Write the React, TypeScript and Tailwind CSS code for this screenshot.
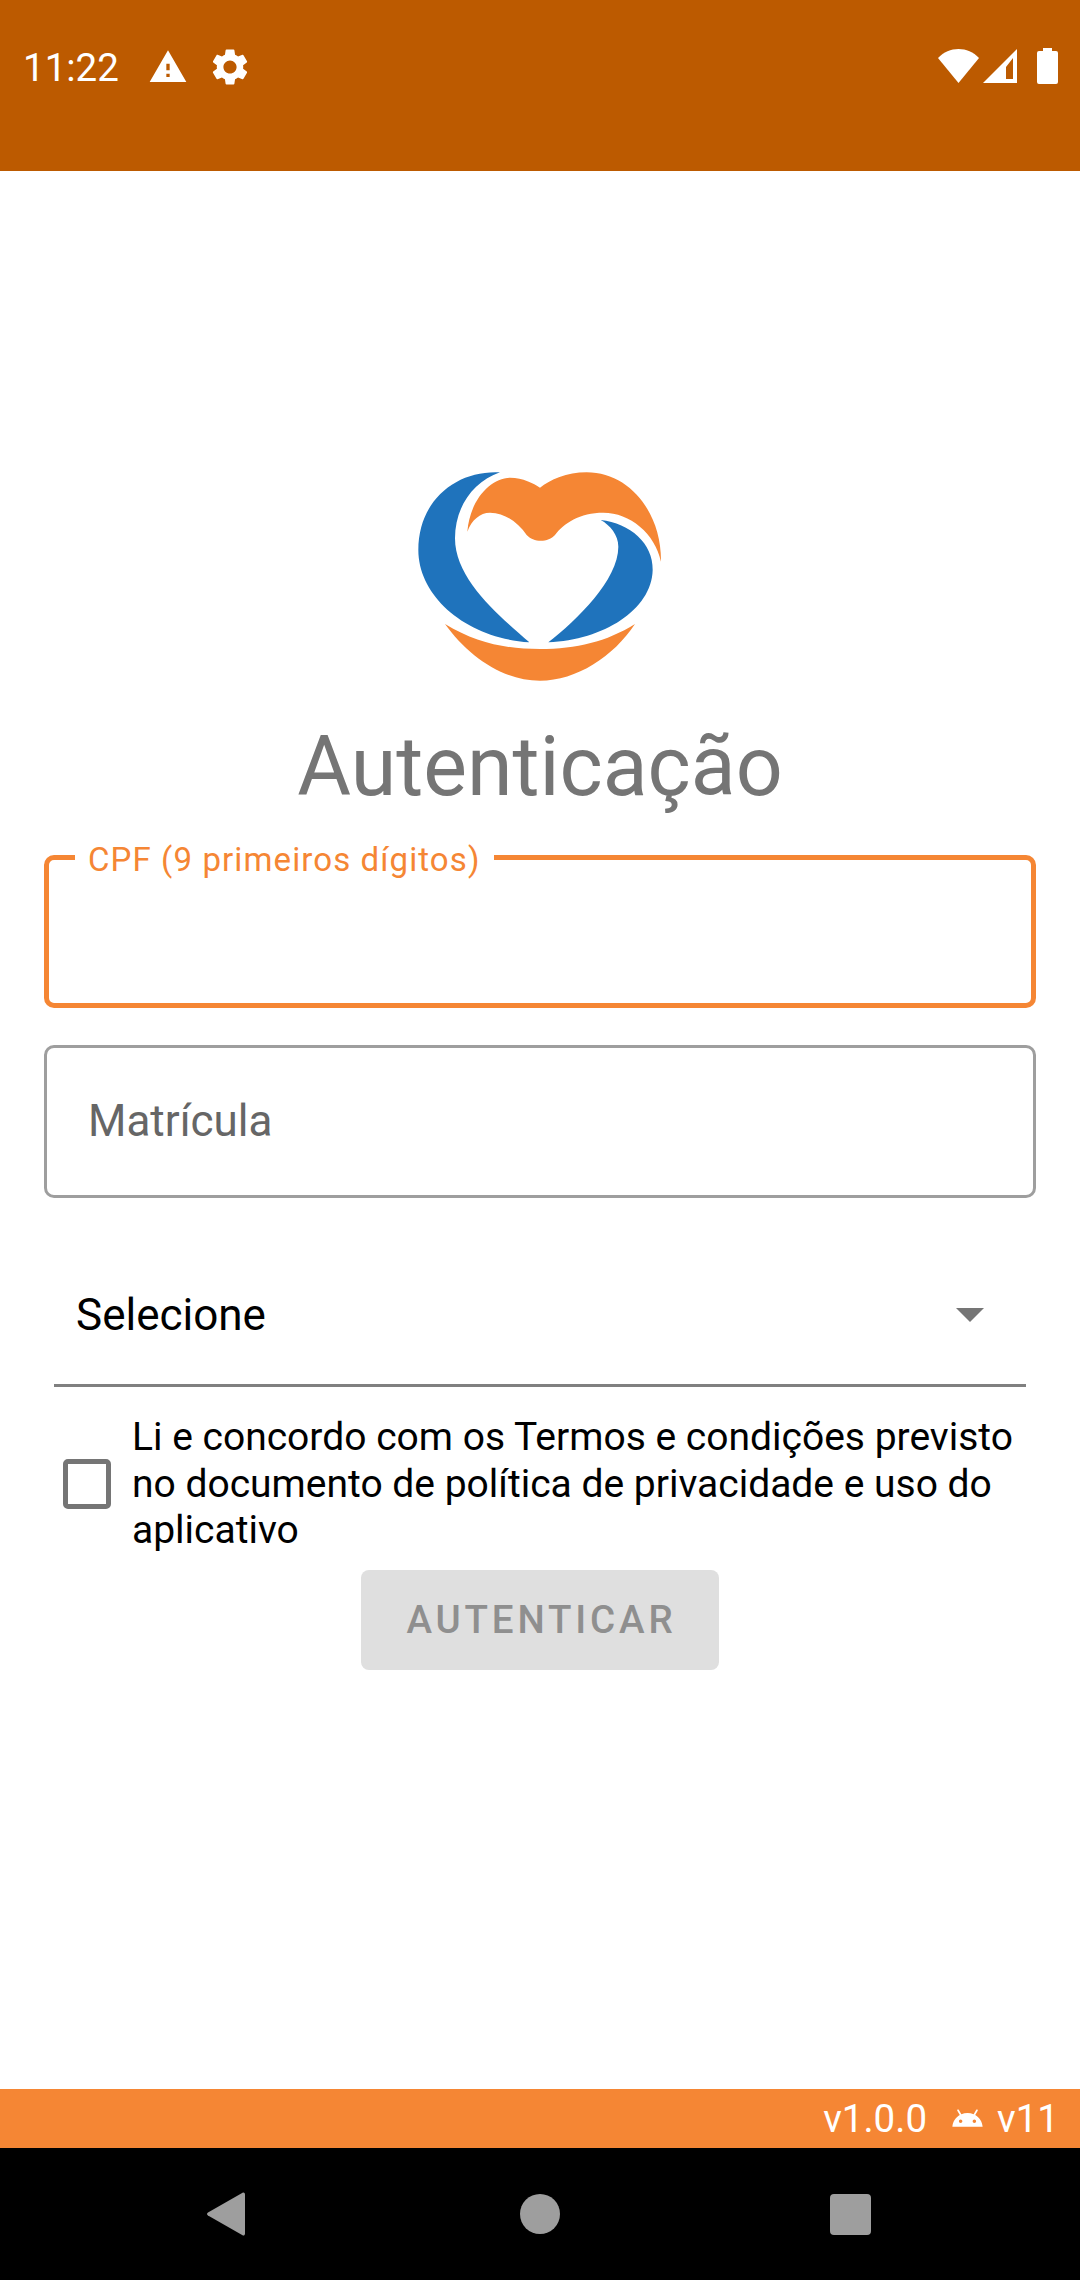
import React from "react";

const font = { fontFamily: "Roboto, sans-serif" };

const Logo = () => (
  <svg viewBox="0 0 900 750" className="w-[300px] h-[250px] block">
    <path fill="#1F73BC" d="M330 67 C200 60 85 150 85 300 C85 440 230 565 418 577 C330 500 195 390 195 265 C195 170 250 95 330 67 Z" />
    <path fill="#F58634" d="M232 245 C240 150 300 85 360 83 C400 83 430 100 450 113 C480 90 530 67 590 67 C720 67 815 190 813 335 C795 250 720 188 640 188 C570 188 520 220 495 255 C475 278 430 278 410 255 C385 220 350 190 300 188 C270 188 245 210 232 245 Z" />
    <path fill="#1F73BC" d="M632 210 C720 220 790 280 788 360 C785 480 640 570 475 577 C560 510 685 390 685 290 C685 255 660 225 632 210 Z" />
    <path fill="#F58634" d="M165 522 C260 580 350 597 450 597 C560 597 650 575 735 522 C670 620 560 692 450 692 C340 692 235 620 165 522 Z" />
  </svg>
);

const StatusBar = () => (
  <div className="h-[171px] bg-[#BC5A00] shrink-0 flex items-start justify-between pl-[23px] pr-[22px] pt-[47px] text-white">
    <div className="flex items-center">
      <span className="text-[38.5px] leading-[40px] w-[125px]">11:22</span>
      <svg viewBox="0 0 24 24" className="w-[40px] h-[40px] -mt-[2px]" fill="currentColor">
        <path d="M1 21h22L12 2 1 21zm12-3h-2v-2h2v2zm0-4h-2v-4h2v4z" />
      </svg>
      <svg viewBox="0 0 24 24" className="w-[44px] h-[44px] ml-[20px] -mt-[2px]" fill="currentColor">
        <path d="M19.14 12.94c.04-.3.06-.61.06-.94 0-.32-.02-.64-.07-.94l2.03-1.58a.49.49 0 0 0 .12-.61l-1.92-3.32a.488.488 0 0 0-.59-.22l-2.39.96c-.5-.38-1.03-.7-1.62-.94l-.36-2.54a.484.484 0 0 0-.48-.41h-3.84c-.24 0-.43.17-.47.41l-.36 2.54c-.59.24-1.13.57-1.62.94l-2.39-.96c-.22-.08-.47 0-.59.22L2.74 8.87c-.12.21-.08.47.12.61l2.03 1.58c-.05.3-.09.63-.09.94s.02.64.07.94l-2.03 1.58a.49.49 0 0 0-.12.61l1.92 3.32c.12.22.37.29.59.22l2.39-.96c.5.38 1.03.7 1.62.94l.36 2.54c.05.24.24.41.48.41h3.84c.24 0 .44-.17.47-.41l.36-2.54c.59-.24 1.13-.56 1.62-.94l2.39.96c.22.08.47 0 .59-.22l1.92-3.32c.12-.22.07-.47-.12-.61l-2.01-1.58zM12 15.6c-1.98 0-3.6-1.62-3.6-3.6s1.62-3.6 3.6-3.6 3.6 1.62 3.6 3.6-1.62 3.6-3.6 3.6z" />
      </svg>
    </div>
    <div className="flex items-start mt-[2px]">
      <svg viewBox="0 0 41 34" className="w-[41px] h-[34px]" fill="currentColor">
        <path d="M0 9 C11 -3 30 -3 41 9 L20.5 34 Z" />
      </svg>
      <svg viewBox="0 0 34 34" className="w-[34px] h-[34px] ml-[4px]" fill="currentColor" fillRule="evenodd">
        <path d="M0 34 L34 0 L34 34 Z M30 9 L23 18 L23 30 L30 30 Z" />
      </svg>
      <svg viewBox="0 0 21 36" className="w-[21px] h-[36px] ml-[20px] -mt-[1px]" fill="currentColor">
        <path d="M6 0h9v3h4a2 2 0 0 1 2 2v29a2 2 0 0 1-2 2H2a2 2 0 0 1-2-2V5a2 2 0 0 1 2-2h4z" />
      </svg>
    </div>
  </div>
);

const NavBar = () => (
  <div className="h-[132px] bg-black shrink-0 flex items-center pl-[207px]">
    <svg viewBox="0 0 38 44" className="w-[38px] h-[44px]" fill="#9E9E9E">
      <path d="M36 0.5 C37 0.2 38 1 38 2.5 V41.5 C38 43 37 43.8 36 43.5 L1 23.5 C-0.3 22.7 -0.3 21.3 1 20.5 Z" />
    </svg>
    <div className="w-[40px] h-[40px] ml-[275px] rounded-full bg-[#9E9E9E]" />
    <div className="w-[41px] h-[41px] ml-[270px] rounded-[4px] bg-[#9E9E9E]" />
  </div>
);

export default function App() {
  return (
    <div className="w-[1080px] h-[2280px] flex flex-col bg-white overflow-hidden" style={font}>
      <StatusBar />

      <div className="flex-1 flex flex-col items-center pt-[279px] px-[44px]">
        <Logo />
        <h1 className="text-[82.5px] leading-[110px] text-[#757575] mt-[12px] font-normal">Autenticação</h1>

        {/* CPF */}
        <div className="relative w-full h-[153px] mt-[33px] rounded-[10px] border-[5px] border-[#F58634]">
          <span className="absolute left-[26px] -top-[20px] px-[13px] bg-white text-[33px] leading-[40px] tracking-[1.1px] text-[#F58634]">
            CPF (9 primeiros dígitos)
          </span>
        </div>

        {/* Matricula */}
        <div className="w-full h-[153px] mt-[37px] pb-[2px] rounded-[10px] border-[3px] border-[#9E9E9E] flex items-center pl-[41px] text-[44px] text-[#666666]">
          Matrícula
        </div>

        {/* Select */}
        <div className="w-[972px] h-[139px] mt-[50px] pl-[22px] pr-[42px] border-b-[3px] border-[#808080] flex items-center justify-between text-[44px] text-black">
          <span className="-mt-[2px]">Selecione</span>
          <svg viewBox="0 0 28 14" className="w-[28px] h-[14px] -mt-[2px]" fill="#757575">
            <path d="M0 0h28L14 14z" />
          </svg>
        </div>

        {/* Termos */}
        <div className="w-full flex items-center mt-[27px] pl-[19px]">
          <div className="w-[48px] h-[50px] shrink-0 rounded-[5px] border-[5px] border-[#757575]" />
          <p className="ml-[21px] text-[39px] leading-[46.5px] text-black">
            Li e concordo com os Termos e condições previsto no documento de política de privacidade e uso do aplicativo
          </p>
        </div>

        <button className="w-[358px] h-[100px] mt-[16px] pl-[3px] rounded-[8px] bg-[#DFDFDF] text-[#8F8F8F] text-[38.5px] font-medium tracking-[3.85px]">
          AUTENTICAR
        </button>
      </div>

      {/* versao */}
      <div className="h-[59px] bg-[#F58634] shrink-0 flex items-center justify-end pr-[21px] text-white text-[38.5px]">
        <span>v1.0.0</span>
        <svg viewBox="0 0 24 24" className="w-[33px] h-[33px] ml-[24px] mr-[13px]" fill="currentColor">
          <path d="M17.6,9.48l1.84-3.18c0.16-0.31,0.04-0.69-0.26-0.85c-0.29-0.15-0.65-0.06-0.83,0.22l-1.88,3.24c-2.86-1.21-6.08-1.21-8.94,0L5.65,5.67c-0.19-0.29-0.58-0.38-0.87-0.2C4.5,5.65,4.41,6.01,4.56,6.3L6.4,9.48C3.3,11.25,1.19,14.45,1,18h22C22.81,14.45,20.7,11.25,17.6,9.48z M7,15.25c-0.69,0-1.25-0.56-1.25-1.25c0-0.69,0.56-1.25,1.25-1.25S8.25,13.31,8.25,14C8.25,14.69,7.69,15.25,7,15.25z M17,15.25c-0.69,0-1.25-0.56-1.25-1.25c0-0.69,0.56-1.25,1.25-1.25s1.25,0.56,1.25,1.25C18.25,14.69,17.69,15.25,17,15.25z" />
        </svg>
        <span>v11</span>
      </div>

      <NavBar />
    </div>
  );
}
